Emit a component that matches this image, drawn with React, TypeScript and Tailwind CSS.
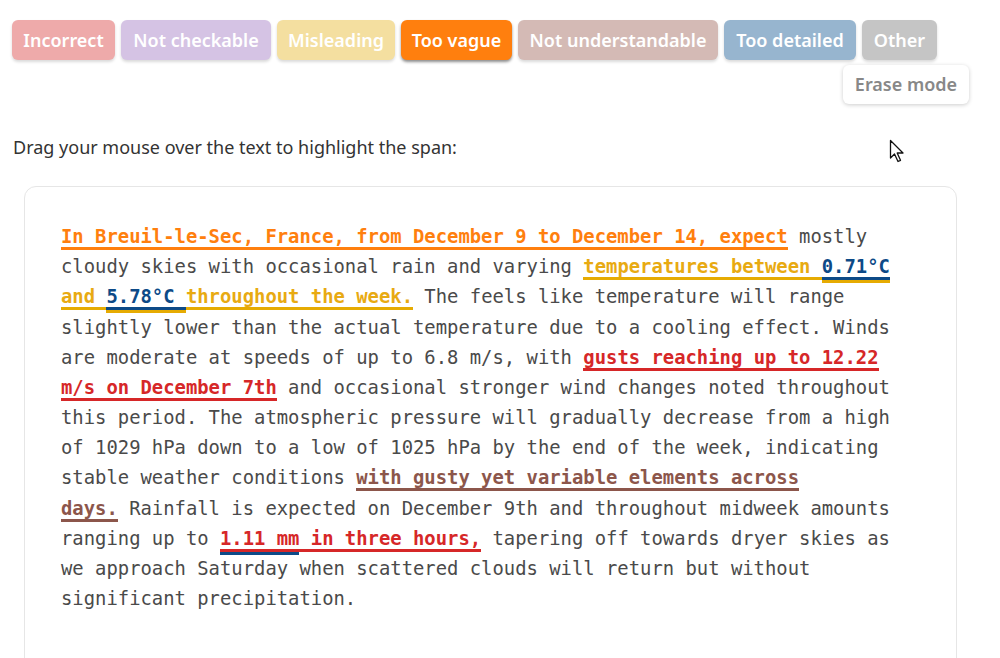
import React from 'react';

const labels = [
  { name: 'Incorrect', w: 'w-[103px]', bg: 'bg-[#eeaaaa]', shadow: 'shadow-[0_2px_3px_rgba(0,0,0,0.15)]' },
  { name: 'Not checkable', w: 'w-[150px]', bg: 'bg-[#d5c3e4]', shadow: 'shadow-[0_2px_3px_rgba(0,0,0,0.15)]' },
  { name: 'Misleading', w: 'w-[118px]', bg: 'bg-[#f4dfa0]', shadow: 'shadow-[0_2px_3px_rgba(0,0,0,0.15)]' },
  { name: 'Too vague', w: 'w-[111px]', bg: 'bg-[#ff7f0e]', shadow: 'shadow-[0_2px_3px_rgba(0,0,0,0.45)]' },
  { name: 'Not understandable', w: 'w-[200px]', bg: 'bg-[#d4bab5]', shadow: 'shadow-[0_2px_3px_rgba(0,0,0,0.15)]' },
  { name: 'Too detailed', w: 'w-[132px]', bg: 'bg-[#97b5cf]', shadow: 'shadow-[0_2px_3px_rgba(0,0,0,0.15)]' },
  { name: 'Other', w: 'w-[75px]', bg: 'bg-[#c5c5c5]', shadow: 'shadow-[0_2px_3px_rgba(0,0,0,0.15)]' },
];

const orange = 'font-bold text-[#ff7f0e] border-b-[3px] border-[#ff7f0e]';
const gold = 'font-bold text-[#e8aa12] border-b-[3px] border-[#e6ab02]';
const goldBlue = 'font-bold text-[#0d4a87] border-b-[3px] border-[#0d4a87] shadow-[0_3px_0_#e6ab02]';
const red = 'font-bold text-[#d62728] border-b-[3px] border-[#d62728]';
const redBlue = 'font-bold text-[#d62728] border-b-[3px] border-[#d62728] shadow-[0_3px_0_#0d4a87]';
const brown = 'font-bold text-[#8c564b] border-b-[3px] border-[#8c564b]';

function Cursor() {
  return (
    <svg
      className="absolute left-[889px] top-[139px]"
      width="18"
      height="26"
      viewBox="0 0 18 26"
    >
      <path
        d="M1.5 1.5 L1.5 19 L5.5 15 L9 22.5 L11.5 21.3 L8.2 14 L14 14 Z"
        fill="#fff"
        stroke="#111"
        strokeWidth="1.3"
        strokeLinejoin="round"
      />
    </svg>
  );
}

export default function App() {
  return (
    <div className="relative min-h-[658px] bg-white px-3 pt-5 font-['Noto_Sans',_'Open_Sans',_sans-serif]">
      {/* Label buttons */}
      <div className="flex flex-wrap gap-[6px]">
        {labels.map((l) => (
          <button
            key={l.name}
            className={`${l.w} ${l.bg} ${l.shadow} h-10 rounded-md text-[18px] font-semibold text-white flex items-center justify-center`}
          >
            {l.name}
          </button>
        ))}
      </div>
      <div className="flex justify-end pr-[19px] mt-[5px]">
        <button className="w-[126px] h-[39px] rounded-md bg-white text-[18px] font-semibold text-[#888] shadow-[0_1px_4px_rgba(0,0,0,0.2)] flex items-center justify-center">
          Erase mode
        </button>
      </div>

      <p className="mt-[31px] text-[18px] text-[#333] leading-6 pl-[1px]">
        Drag your mouse over the text to highlight the span:
      </p>

      {/* Text box */}
      <div className="mt-[27px] ml-3 w-[933px] rounded-xl border border-[#e6e6e6] pl-[36px] pr-[36px] pt-[34px] pb-[80px]">
        <p className="font-['DejaVu_Sans_Mono',_monospace] text-[18.86px] leading-[1.6] text-[#4a4a4a]">
          <span className={orange}>In Breuil-le-Sec, France, from December 9 to December 14, expect</span> mostly
          cloudy skies with occasional rain and varying{' '}
          <span className={gold}>temperatures between </span>
          <span className={goldBlue}>0.71°C</span>
          <span className={gold}> and </span>
          <span className={goldBlue}>5.78°C </span>
          <span className={gold}>throughout the week.</span> The feels like temperature will range
          slightly lower than the actual temperature due to a cooling effect. Winds are moderate at
          speeds of up to 6.8 m/s, with{' '}
          <span className={red}>gusts reaching up to 12.22 m/s on December 7th</span> and occasional
          stronger wind changes noted throughout this period. The atmospheric pressure will gradually
          decrease from a high of 1029 hPa down to a low of 1025 hPa by the end of the week, indicating
          stable weather conditions{' '}
          <span className={brown}>with gusty yet variable elements across</span>
          <br />
          <span className={brown}>days.</span> Rainfall is expected on December 9th and throughout
          midweek amounts ranging up to <span className={redBlue}>1.11 mm</span>
          <span className={red}> in three hours,</span> tapering off towards dryer skies as we approach
          Saturday when scattered clouds will return but without significant precipitation.
        </p>
      </div>

      <Cursor />
    </div>
  );
}
